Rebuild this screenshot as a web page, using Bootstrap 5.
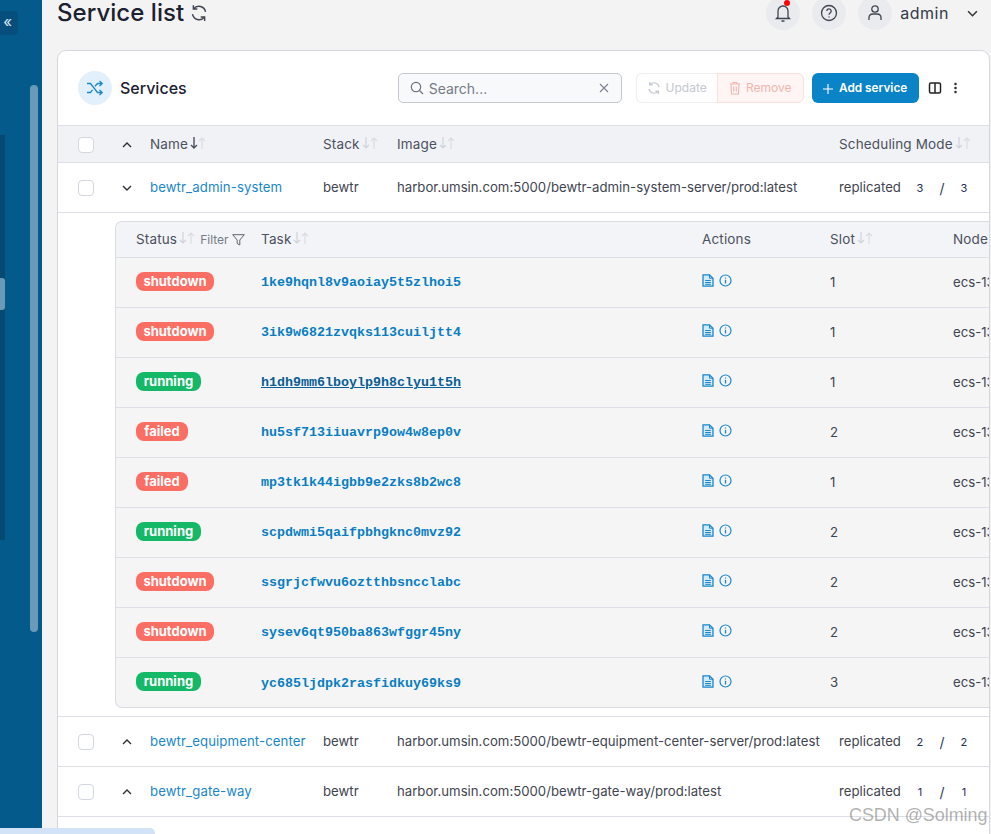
<!DOCTYPE html>
<html lang="en">
<head>
<meta charset="utf-8">
<title>Service list</title>
<link href="https://cdn.jsdelivr.net/npm/bootstrap@5.3.0/dist/css/bootstrap.min.css" rel="stylesheet">
<style>
html,body{height:834px;overflow:hidden}
body{background:#f3f3f4;font-family:Inter,"Liberation Sans",sans-serif;font-size:13.2px;color:#3f4550}
.side-rail{width:42px;height:834px;background:#055a8c;flex:none;position:relative}
.rail-toggle{position:absolute;left:0;top:11px;width:18px;height:24px;background:#064f7c;border-radius:0 4px 4px 0;color:#dfe9f0;font-size:15px;line-height:21px;text-align:center;padding-right:3px}
.rail-thumb{position:absolute;left:30px;top:85px;width:8px;height:547px;background:#6a9ab8;border-radius:4px}
.rail-strip{position:absolute;left:0;top:135px;width:5px;height:405px;background:#064a72}
.rail-pill{position:absolute;left:0;top:278px;width:5px;height:32px;background:#6a9ab8;border-radius:0 3px 3px 0}
.main-pane{width:949px;padding-left:15px;flex:none}
.top-bar{height:34px;margin-top:-4px;margin-bottom:20px}
.page-title{font-size:24px;font-weight:500;color:#1b2130;line-height:34px;letter-spacing:.05px;margin:0}
.title-sync{margin-left:6px;color:#3f4550}
.round-btn{width:34px;height:34px;border-radius:50%;background:#e9ebef;color:#3f4550;position:relative;margin-right:12px}
.round-last{margin-right:0}
.bell-dot{position:absolute;left:18px;top:4px;width:6px;height:6px;border-radius:50%;background:#f00}
.user-name{font-size:16px;color:#343a46;margin-left:8px;letter-spacing:.55px}
.user-chev{margin-left:18px;margin-right:13px;color:#333}
.svc-card{width:933px;height:800px;background:#fff;border:1px solid #d4d7de;border-radius:9px;overflow:hidden}
.svc-head{height:75px;padding:0 24px 0 20px;border-bottom:1px solid #dcdfe5}
.svc-icon{width:34px;height:34px;border-radius:50%;background:#e1f0fa;color:#1a87cc}
.svc-title{font-size:16px;font-weight:500;color:#1b2130;margin-left:8px}
.search-box{width:224px;height:30px;margin-left:211px;border:1px solid #c4c8cf;border-radius:5px;background:#f8f9fa;padding:0 12px 0 11px;color:#757c88;font-size:14px;gap:5px}
.act-group{margin-left:14px;height:30px;border-radius:6px}
.act-upd,.act-rem{font-size:12px;height:30px;border:1px solid #eceef1;display:flex;align-items:center;gap:5px}
.act-upd{width:82px;justify-content:center;color:#c3c8d1;border-radius:6px 0 0 6px;background:#fff}
.act-rem{width:87px;justify-content:center;color:#f3b5ae;background:#fef5f4;border-color:#fbe0dd;border-radius:0 6px 6px 0;margin-left:-1px}
.add-btn{margin-left:8px;width:107px;height:30px;padding-top:1px;background:#0a84c6;color:#fff;font-size:11.8px;font-weight:600;border-radius:6px;gap:6px}
.tool-a{margin-left:9px;color:#222}
.tool-b{margin-left:11px;color:#333}
.svc-table{width:932px;table-layout:fixed;border-collapse:collapse;margin:0}
.svc-table>thead>tr>th,.svc-table>tbody>tr>td{padding:2px 0 0;border-bottom:1px solid #dcdfe5;vertical-align:middle;white-space:nowrap;font-weight:400}
.svc-table>tbody>tr>td.task-wrap{background:#fff;padding:8px 0 8px 57px}
.svc-table>thead>tr{height:36px;background:#f1f2f6}
.svc-table>tbody>tr.data-row{height:50px}
.svc-table>thead>tr>th.cell-check,.svc-table>tbody>tr>td.cell-check{padding-left:20px}
.svc-table .form-check-input{margin:0;width:16px;height:16px;border-color:#d3d7df;display:block;border-radius:4px}
.th-text{color:#4b515d;font-size:13.5px;letter-spacing:.15px}
.svc-link{color:#1a87cc;text-decoration:none;letter-spacing:.1px}
.chev{color:#2b2f36;display:block;margin-left:4px}
.arrows{display:inline-block;vertical-align:-1px;margin-left:1px}
.rep-wrap{display:inline-flex;align-items:center}
.rep-note{display:inline-flex;align-items:center;font-size:11px;color:#1f2d57;margin-left:8px}
.rep-note span{width:22px;text-align:center;flex:none}
.rep-note .rep-slash{font-size:14px;color:#2a3a63}
.task-panel{background:#f5f5f6;border:1px solid #d9dce2;border-right:0;border-radius:7px 0 0 7px;overflow:hidden}
.task-table{width:1000px;table-layout:fixed;border-collapse:collapse;margin:0}
.task-table th,.task-table td{padding:0;border-bottom:1px solid #dcdfe5;white-space:nowrap;vertical-align:middle;font-weight:400}
.task-table th{height:36px;background:#f3f4f7}
.task-table td{height:50px}
.task-table tr:last-child td{border-bottom:0;height:49px;padding-top:2px}
.task-table .first-c{padding-left:20px}
.filter-txt{font-size:12px;color:#757b86;margin-left:4px}
.state-pill{display:inline-block;height:19px;line-height:19px;font-size:13px;font-weight:700;color:#fff;border-radius:8px;text-align:center;vertical-align:2px}
.st-down{width:78px;background:#fb6e64}
.st-run{width:65px;background:#14b866}
.st-fail{width:52px;background:#fb6e64}
.task-link{font-family:"Liberation Mono",monospace;font-weight:700;font-size:13.33px;color:#0a7ec2;text-decoration:none;vertical-align:.5px}
.task-hover{color:#0a5f94;text-decoration:underline}
.acts{color:#1a87cc;gap:5px;margin-top:-4px}
.wm{position:absolute;left:849px;top:802px;font-family:"Liberation Sans",sans-serif;font-size:17.9px;color:rgba(125,125,125,.6);z-index:5;white-space:nowrap}
.under-bar{position:absolute;left:0;top:828px;width:155px;height:6px;background:#d3e3f7;border-radius:0 5px 0 0;z-index:5}
</style>
</head>
<body>
<svg width="0" height="0" class="position-absolute">
<symbol id="sa" viewBox="0 0 18 14"><path d="M5 1v11M2 9l3 3 3-3" fill="none" stroke="#cfd3da" stroke-width="1.2"/><path d="M13 13V2M10 5l3-3 3 3" fill="none" stroke="#d9dce2" stroke-width="1.2"/></symbol>
<symbol id="sb" viewBox="0 0 18 14"><path d="M5 1v11M2 9l3 3 3-3" fill="none" stroke="#4b515d" stroke-width="1.4"/><path d="M13 13V2M10 5l3-3 3 3" fill="none" stroke="#d9dce2" stroke-width="1.2"/></symbol>
<symbol id="up" viewBox="0 0 10 6"><path d="M1 5l4-4 4 4" fill="none" stroke="currentColor" stroke-width="1.4"/></symbol>
<symbol id="dn" viewBox="0 0 10 6"><path d="M1 1l4 4 4-4" fill="none" stroke="currentColor" stroke-width="1.4"/></symbol>
<symbol id="doc" viewBox="0 0 12 13"><path d="M1 .8h6.500l3.500 3.400v8H1z" fill="#d5e9f6" stroke="currentColor" stroke-width="1.300"/><path d="M7.500 .8v3.400H11M3.200 6.500h5.600M3.200 8.500h5.600M3.200 10.300h5.600" fill="none" stroke="currentColor" stroke-width="1"/></symbol>
<symbol id="inf" viewBox="0 0 13 13"><circle cx="6.500" cy="6.500" r="5.500" fill="none" stroke="currentColor" stroke-width="1.200"/><path d="M6.500 5.800v3.600M6.500 3.400v1.200" stroke="currentColor" stroke-width="1.300"/></symbol>
<symbol id="rfr" viewBox="0 0 16 16"><path d="M13.800 7A6 6 0 0 0 3.200 4.300M2.200 9A6 6 0 0 0 12.800 11.700M3 1v3.500h3.500M13 15v-3.500H9.500" fill="none" stroke="currentColor" stroke-width="1.300"/></symbol>
</svg>

<div class="d-flex">
  <aside class="side-rail">
    <div class="rail-toggle">«</div>
    <div class="rail-strip"></div>
    <div class="rail-pill"></div>
    <div class="rail-thumb"></div>
  </aside>

  <main class="main-pane">
    <div class="top-bar d-flex align-items-center">
      <h1 class="page-title">Service list</h1>
      <svg class="title-sync" width="18" height="18"><use href="#rfr"/></svg>
      <div class="ms-auto d-flex align-items-center">
        <span class="round-btn d-flex align-items-center justify-content-center">
          <svg width="18" height="20" viewBox="0 0 18 20" fill="none" stroke="currentColor" stroke-width="1.300"><path d="M4 14V8a5 5 0 0 1 10 0v6l1.500 1.500h-13zM7.500 18h3"/></svg><i class="bell-dot"></i>
        </span>
        <span class="round-btn d-flex align-items-center justify-content-center">
          <svg width="18" height="18" viewBox="0 0 18 18" fill="none" stroke="currentColor" stroke-width="1.300"><circle cx="9" cy="9" r="7.500"/><path d="M6.800 7a2.200 2.200 0 1 1 3.300 2c-.8.500-1.100.9-1.100 1.800M9 12.400v1.200"/></svg>
        </span>
        <span class="round-btn round-last d-flex align-items-center justify-content-center">
          <svg width="18" height="18" viewBox="0 0 18 18" fill="none" stroke="currentColor" stroke-width="1.300"><circle cx="9" cy="5" r="3.200"/><path d="M3 16v-2.500A3.500 3.500 0 0 1 6.500 10h5a3.500 3.500 0 0 1 3.500 3.500V16"/></svg>
        </span>
        <span class="user-name">admin</span>
        <svg class="user-chev" width="11" height="7"><use href="#dn"/></svg>
      </div>
    </div>

    <section class="svc-card">
      <div class="svc-head d-flex align-items-center">
        <span class="svc-icon d-flex align-items-center justify-content-center">
          <svg width="18" height="18" viewBox="0 0 18 18" fill="none" stroke="currentColor" stroke-width="1.300"><path d="M1 4.500h3.500l7 9H16M1 13.500h3.500l2-2.600M9 7.200l2.500-2.700H16M13.500 2l2.700 2.500L13.500 7M13.500 11l2.700 2.500-2.700 2.500"/></svg>
        </span>
        <span class="svc-title">Services</span>
        <div class="search-box d-flex align-items-center">
          <svg width="14" height="14" viewBox="0 0 14 14" fill="none" stroke="#6c7380" stroke-width="1.200"><circle cx="6" cy="6" r="4.700"/><path d="M9.500 9.500L13 13"/></svg>
          <span>Search...</span>
          <svg class="ms-auto" width="10" height="10" viewBox="0 0 10 10" fill="none" stroke="#7d838e" stroke-width="1.100"><path d="M1 1l8 8M9 1l-8 8"/></svg>
        </div>
        <div class="act-group d-flex">
          <span class="act-upd"><svg width="14" height="14"><use href="#rfr"/></svg>Update</span>
          <span class="act-rem"><svg width="12" height="14" viewBox="0 0 12 14" fill="none" stroke="currentColor" stroke-width="1.100"><path d="M1 3h10M4 3V1.500h4V3M2 3l.5 10h7L10 3M4.700 5.500v5M7.300 5.500v5"/></svg>Remove</span>
        </div>
        <span class="add-btn d-flex align-items-center justify-content-center">
          <svg width="10" height="10" viewBox="0 0 10 10" stroke="#fff" stroke-width="1.100"><path d="M5 0v10M0 5h10"/></svg>Add service
        </span>
        <svg class="tool-a" width="14" height="14" viewBox="0 0 14 14" fill="none" stroke="currentColor" stroke-width="1.500"><rect x="1.500" y="2" width="11" height="10" rx="1.500"/><path d="M7 2v10"/></svg>
        <svg class="tool-b" width="5" height="14" viewBox="0 0 5 14" fill="currentColor"><circle cx="2.500" cy="3" r="1.300"/><circle cx="2.500" cy="7" r="1.300"/><circle cx="2.500" cy="11" r="1.300"/></svg>
      </div>

      <table class="svc-table">
        <colgroup><col style="width:60px"><col style="width:32px"><col style="width:173px"><col style="width:74px"><col style="width:442px"><col style="width:151px"></colgroup>
        <thead><tr>
          <th class="cell-check"><input class="form-check-input" type="checkbox" aria-label="Select all"></th>
          <th><svg class="chev" width="10" height="6"><use href="#up"/></svg></th>
          <th><span class="th-text">Name</span><svg class="arrows" width="18" height="14"><use href="#sb"/></svg></th>
          <th><span class="th-text">Stack</span><svg class="arrows" width="18" height="14"><use href="#sa"/></svg></th>
          <th><span class="th-text">Image</span><svg class="arrows" width="18" height="14"><use href="#sa"/></svg></th>
          <th><span class="th-text">Scheduling Mode</span><svg class="arrows" width="18" height="14"><use href="#sa"/></svg></th>
        </tr></thead>
        <tbody>
          <tr class="data-row">
            <td class="cell-check"><input class="form-check-input" type="checkbox" aria-label="Select"></td>
            <td><svg class="chev" width="10" height="6"><use href="#dn"/></svg></td>
            <td><a class="svc-link" href="#">bewtr_admin-system</a></td>
            <td>bewtr</td>
            <td>harbor.umsin.com:5000/bewtr-admin-system-server/prod:latest</td>
            <td><span class="rep-wrap">replicated<span class="rep-note"><span>3</span><span class="rep-slash">/</span><span>3</span></span></span></td>
          </tr>
          <tr>
            <td colspan="6" class="task-wrap">
              <div class="task-panel">
                <table class="task-table">
                  <colgroup><col style="width:145px"><col style="width:441px"><col style="width:128px"><col style="width:123px"><col style="width:163px"></colgroup>
                  <thead><tr>
                    <th class="first-c"><span class="th-text">Status</span><svg class="arrows" width="18" height="14"><use href="#sa"/></svg><span class="filter-txt">Filter</span> <svg width="13" height="12" viewBox="0 0 13 12" fill="none" stroke="#5d636e" stroke-width="1"><path d="M.7.7h11.600L7.800 6v5L5.200 9.500V6z"/></svg></th>
                    <th><span class="th-text">Task</span><svg class="arrows" width="18" height="14"><use href="#sa"/></svg></th>
                    <th><span class="th-text">Actions</span></th>
                    <th><span class="th-text">Slot</span><svg class="arrows" width="18" height="14"><use href="#sa"/></svg></th>
                    <th><span class="th-text">Node</span></th>
                  </tr></thead>
                  <tbody>
                    <tr><td class="first-c"><span class="state-pill st-down">shutdown</span></td><td><a class="task-link" href="#">1ke9hqnl8v9aoiay5t5zlhoi5</a></td><td><div class="acts d-flex"><svg width="12" height="13"><use href="#doc"/></svg><svg width="13" height="13"><use href="#inf"/></svg></div></td><td>1</td><td>ecs-1358</td></tr>
                    <tr><td class="first-c"><span class="state-pill st-down">shutdown</span></td><td><a class="task-link" href="#">3ik9w6821zvqks113cuiljtt4</a></td><td><div class="acts d-flex"><svg width="12" height="13"><use href="#doc"/></svg><svg width="13" height="13"><use href="#inf"/></svg></div></td><td>1</td><td>ecs-1358</td></tr>
                    <tr><td class="first-c"><span class="state-pill st-run">running</span></td><td><a class="task-link task-hover" href="#">h1dh9mm6lboylp9h8clyu1t5h</a></td><td><div class="acts d-flex"><svg width="12" height="13"><use href="#doc"/></svg><svg width="13" height="13"><use href="#inf"/></svg></div></td><td>1</td><td>ecs-1358</td></tr>
                    <tr><td class="first-c"><span class="state-pill st-fail">failed</span></td><td><a class="task-link" href="#">hu5sf713iiuavrp9ow4w8ep0v</a></td><td><div class="acts d-flex"><svg width="12" height="13"><use href="#doc"/></svg><svg width="13" height="13"><use href="#inf"/></svg></div></td><td>2</td><td>ecs-1358</td></tr>
                    <tr><td class="first-c"><span class="state-pill st-fail">failed</span></td><td><a class="task-link" href="#">mp3tk1k44igbb9e2zks8b2wc8</a></td><td><div class="acts d-flex"><svg width="12" height="13"><use href="#doc"/></svg><svg width="13" height="13"><use href="#inf"/></svg></div></td><td>1</td><td>ecs-1358</td></tr>
                    <tr><td class="first-c"><span class="state-pill st-run">running</span></td><td><a class="task-link" href="#">scpdwmi5qaifpbhgknc0mvz92</a></td><td><div class="acts d-flex"><svg width="12" height="13"><use href="#doc"/></svg><svg width="13" height="13"><use href="#inf"/></svg></div></td><td>2</td><td>ecs-1358</td></tr>
                    <tr><td class="first-c"><span class="state-pill st-down">shutdown</span></td><td><a class="task-link" href="#">ssgrjcfwvu6oztthbsncclabc</a></td><td><div class="acts d-flex"><svg width="12" height="13"><use href="#doc"/></svg><svg width="13" height="13"><use href="#inf"/></svg></div></td><td>2</td><td>ecs-1358</td></tr>
                    <tr><td class="first-c"><span class="state-pill st-down">shutdown</span></td><td><a class="task-link" href="#">sysev6qt950ba863wfggr45ny</a></td><td><div class="acts d-flex"><svg width="12" height="13"><use href="#doc"/></svg><svg width="13" height="13"><use href="#inf"/></svg></div></td><td>2</td><td>ecs-1358</td></tr>
                    <tr><td class="first-c"><span class="state-pill st-run">running</span></td><td><a class="task-link" href="#">yc685ljdpk2rasfidkuy69ks9</a></td><td><div class="acts d-flex"><svg width="12" height="13"><use href="#doc"/></svg><svg width="13" height="13"><use href="#inf"/></svg></div></td><td>3</td><td>ecs-1358</td></tr>
                  </tbody>
                </table>
              </div>
            </td>
          </tr>
          <tr class="data-row">
            <td class="cell-check"><input class="form-check-input" type="checkbox" aria-label="Select"></td>
            <td><svg class="chev" width="10" height="6"><use href="#up"/></svg></td>
            <td><a class="svc-link" href="#">bewtr_equipment-center</a></td>
            <td>bewtr</td>
            <td>harbor.umsin.com:5000/bewtr-equipment-center-server/prod:latest</td>
            <td><span class="rep-wrap">replicated<span class="rep-note"><span>2</span><span class="rep-slash">/</span><span>2</span></span></span></td>
          </tr>
          <tr class="data-row">
            <td class="cell-check"><input class="form-check-input" type="checkbox" aria-label="Select"></td>
            <td><svg class="chev" width="10" height="6"><use href="#up"/></svg></td>
            <td><a class="svc-link" href="#">bewtr_gate-way</a></td>
            <td>bewtr</td>
            <td>harbor.umsin.com:5000/bewtr-gate-way/prod:latest</td>
            <td><span class="rep-wrap">replicated<span class="rep-note"><span>1</span><span class="rep-slash">/</span><span>1</span></span></span></td>
          </tr>
        </tbody>
      </table>
    </section>
  </main>
</div>
<div class="under-bar"></div>
<div class="wm">CSDN @Solming</div>
<script src="https://cdn.jsdelivr.net/npm/bootstrap@5.3.0/dist/js/bootstrap.bundle.min.js"></script>
</body>
</html>
